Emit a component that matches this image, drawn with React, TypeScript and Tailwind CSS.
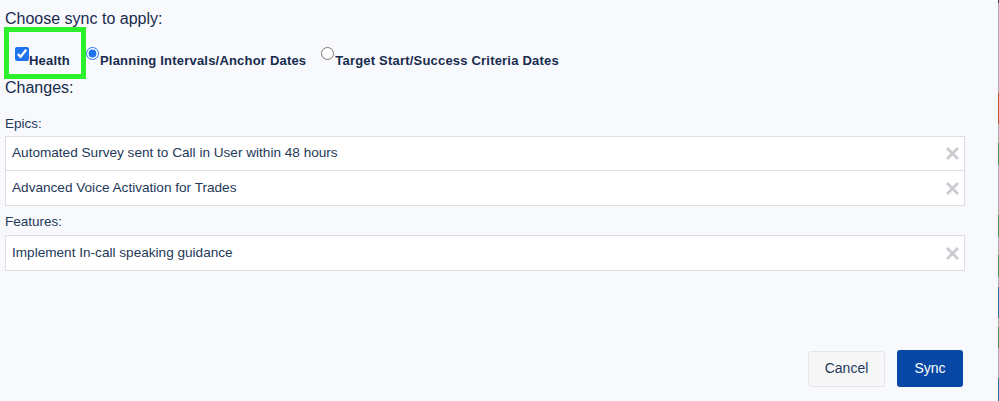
import React from "react";

const XIcon = () => (
  <svg width="13" height="13" viewBox="0 0 13 13" className="shrink-0">
    <path d="M2 2 L11 11 M11 2 L2 11" stroke="#c9ccd1" strokeWidth="2.8" strokeLinecap="square" />
  </svg>
);

const Row = ({ text, last }: { text: string; last?: boolean }) => (
  <div
    className={`flex items-center justify-between h-[34px] pl-[6px] pr-[5px] bg-white ${
      last ? "" : "border-b border-[#dcdfe4]"
    }`}
  >
    <span className="text-[13.6px] text-[#243858]">{text}</span>
    <XIcon />
  </div>
);

const strip: { c: string; h: number }[] = [
  { c: "#3a3f47", h: 3 },
  { c: "#a9acb2", h: 90 },
  { c: "#c0562a", h: 31 },
  { c: "#a9acb2", h: 19 },
  { c: "#4b8f4e", h: 22 },
  { c: "#a9acb2", h: 50 },
  { c: "#4b8f4e", h: 22 },
  { c: "#a9acb2", h: 18 },
  { c: "#4b8f4e", h: 22 },
  { c: "#a9acb2", h: 10 },
  { c: "#2b6ea6", h: 31 },
  { c: "#a9acb2", h: 9 },
  { c: "#4b8f4e", h: 21 },
  { c: "#a9acb2", h: 30 },
  { c: "#2b6ea6", h: 23 },
];

export default function App() {
  return (
    <div
      className="w-[999px] h-[401px] flex bg-[#f7f9fd] overflow-hidden text-[#172b4d]"
      style={{ fontFamily: '"Liberation Sans", Arial, sans-serif' }}
    >
      <div className="flex-1 flex flex-col pl-[5px] pr-[33px]">
        <div className="text-[16px] leading-[20px] pt-[9px] h-[27px]">Choose sync to apply:</div>
        <div className="flex items-start h-[52px]">
          <label className="flex items-start w-[82px] h-[52px] border-[5px] border-[#2bf02b] -ml-[1px] pl-[6px] pt-[15px]">
            <input
              type="checkbox"
              defaultChecked
              className="m-0 w-[14px] h-[14px] accent-[#1e73f0]"
            />
            <span className="text-[13px] font-bold leading-[15px] pt-[6px] tracking-[0.2px]">Health</span>
          </label>
          <label className="flex items-start pt-[20px]">
            <input type="radio" name="s" defaultChecked className="m-0 w-[13px] h-[13px] accent-[#1e73f0]" />
            <span className="text-[13px] font-bold leading-[15px] pt-[6px] ml-[1px] tracking-[0.2px]">
              Planning Intervals/Anchor Dates
            </span>
          </label>
          <label className="flex items-start pt-[20px] ml-[15px]">
            <input type="radio" name="s" className="m-0 w-[13px] h-[13px]" />
            <span className="text-[13px] font-bold leading-[15px] pt-[6px] ml-[1px] tracking-[0.2px]">
              Target Start/Success Criteria Dates
            </span>
          </label>
        </div>
        <div className="text-[16px] leading-[20px] mt-[-1px]">Changes:</div>
        <div className="text-[13.5px] leading-[16px] mt-[18px] text-[#243858]">Epics:</div>
        <div className="mt-[4px] border border-[#dcdfe4] flex flex-col">
          <Row text="Automated Survey sent to Call in User within 48 hours" />
          <Row text="Advanced Voice Activation for Trades" last />
        </div>
        <div className="text-[13.5px] leading-[16px] mt-[8px] text-[#243858]">Features:</div>
        <div className="mt-[5px] border border-[#dcdfe4] flex flex-col">
          <Row text="Implement In-call speaking guidance" last />
        </div>
        <div className="flex-1" />
        <div className="flex justify-end items-center gap-[12px] mb-[14px] mr-[2px]">
          <button className="w-[77px] h-[36px] rounded-[3px] border border-[#e4e6ea] bg-[#f7f7f8] text-[14px] text-[#243858]">
            Cancel
          </button>
          <button className="w-[66px] h-[37px] rounded-[3px] bg-[#0747a6] text-[14px] text-white">
            Sync
          </button>
        </div>
      </div>
      <div className="w-[1px] flex flex-col">
        {strip.map((s, i) => (
          <div key={i} style={{ backgroundColor: s.c, height: s.h }} />
        ))}
      </div>
    </div>
  );
}
